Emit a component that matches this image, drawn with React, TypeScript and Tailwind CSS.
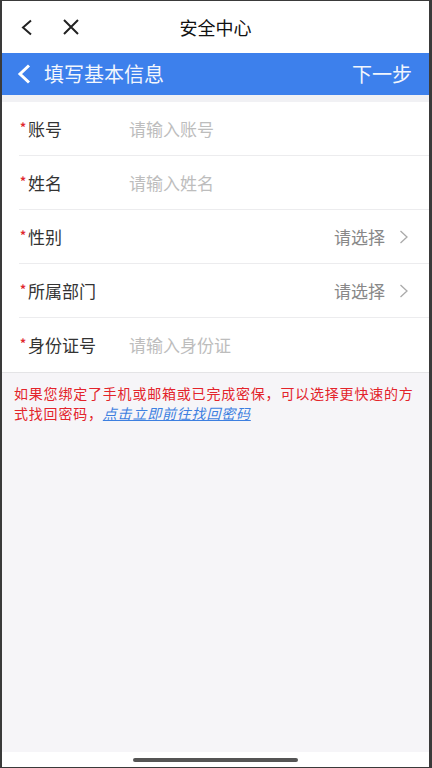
const fields = [
	{ label: "账号", placeholder: "请输入账号" },
	{ label: "姓名", placeholder: "请输入姓名" },
	{ label: "性别", select: true },
	{ label: "所属部门", select: true },
	{ label: "身份证号", placeholder: "请输入身份证" },
]

function Chevron({ className }: { className?: string }) {
	return (
		<svg width="10" height="14" viewBox="0 0 10 14" className={className}>
			<path d="M1.5 1 L8 7 L1.5 13" fill="none" stroke="currentColor" strokeWidth="1.3" />
		</svg>
	)
}

export default function App() {
	return (
		<div className="h-[768px] w-[432px] bg-[#3a3a3a] pb-px pl-[2px] pr-[3px] pt-px font-['Noto_Sans_CJK_SC','Noto_Sans',sans-serif]">
			<div className="flex h-full flex-col bg-[#f6f5f8]">
				<header className="relative flex h-[52px] items-center bg-white">
					<svg width="14" height="17" viewBox="0 0 14 17" className="ml-[18px] text-[#222]">
						<path d="M11 1.5 L3 8.5 L11 15.5" fill="none" stroke="currentColor" strokeWidth="2" />
					</svg>
					<svg width="18" height="16" viewBox="0 0 18 16" className="ml-[28px] text-[#222]">
						<path d="M2 1 L16 15 M16 1 L2 15" fill="none" stroke="currentColor" strokeWidth="2" />
					</svg>
					<span className="absolute left-1/2 -translate-x-1/2 text-[18px] text-[#111]">
						安全中心
					</span>
				</header>
				<div className="flex h-[42px] items-center justify-between bg-[#3d80ec] text-white">
					<div className="flex items-center">
						<svg width="16" height="20" viewBox="0 0 16 20" className="ml-[14px]">
							<path d="M13 1.5 L4 10 L13 18.5" fill="none" stroke="white" strokeWidth="3" />
						</svg>
						<span className="ml-[12px] text-[20px] text-[#f2f6fd]">填写基本信息</span>
					</div>
					<span className="mr-[17px] text-[20px] text-[#f2f6fd]">下一步</span>
				</div>
				<div className="h-[7px] bg-[#f1f1f4]" />
				<div className="border-b border-[#e4e4e6] bg-white">
					{fields.map((f, i) => (
						<div
							key={f.label}
							className={`ml-[17px] flex h-[54px] items-center pl-[1px] pr-[20px] ${i < fields.length - 1 ? "border-b border-[#ececee]" : ""}`}
						>
							<div className="flex w-[109px] items-center">
								<span className="w-[8px] -translate-y-[2px] text-[12px] font-bold text-[#e0282e]">*</span>
								<span className="text-[17px] text-[#333]">{f.label}</span>
							</div>
							{f.select ? (
								<div className="ml-auto flex items-center text-[17px] text-[#888]">
									请选择
									<Chevron className="ml-[14px] text-[#aaa]" />
								</div>
							) : (
								<span className="text-[17px] text-[#bdbdbd]">{f.placeholder}</span>
							)}
						</div>
					))}
				</div>
				<p className="px-[12px] pt-[10px] text-[14px] leading-[20px] tracking-[0.8px] text-[#e3242b]">
					如果您绑定了手机或邮箱或已完成密保，可以选择更快速的方式找回密码，
					<a className="italic text-[#3d7fe0] underline">点击立即前往找回密码</a>
				</p>
				<div className="flex-1" />
				<div className="flex h-[15px] justify-center bg-white pt-[6px]">
					<div className="h-[4px] w-[165px] rounded-full bg-[#555]" />
				</div>
			</div>
		</div>
	)
}
